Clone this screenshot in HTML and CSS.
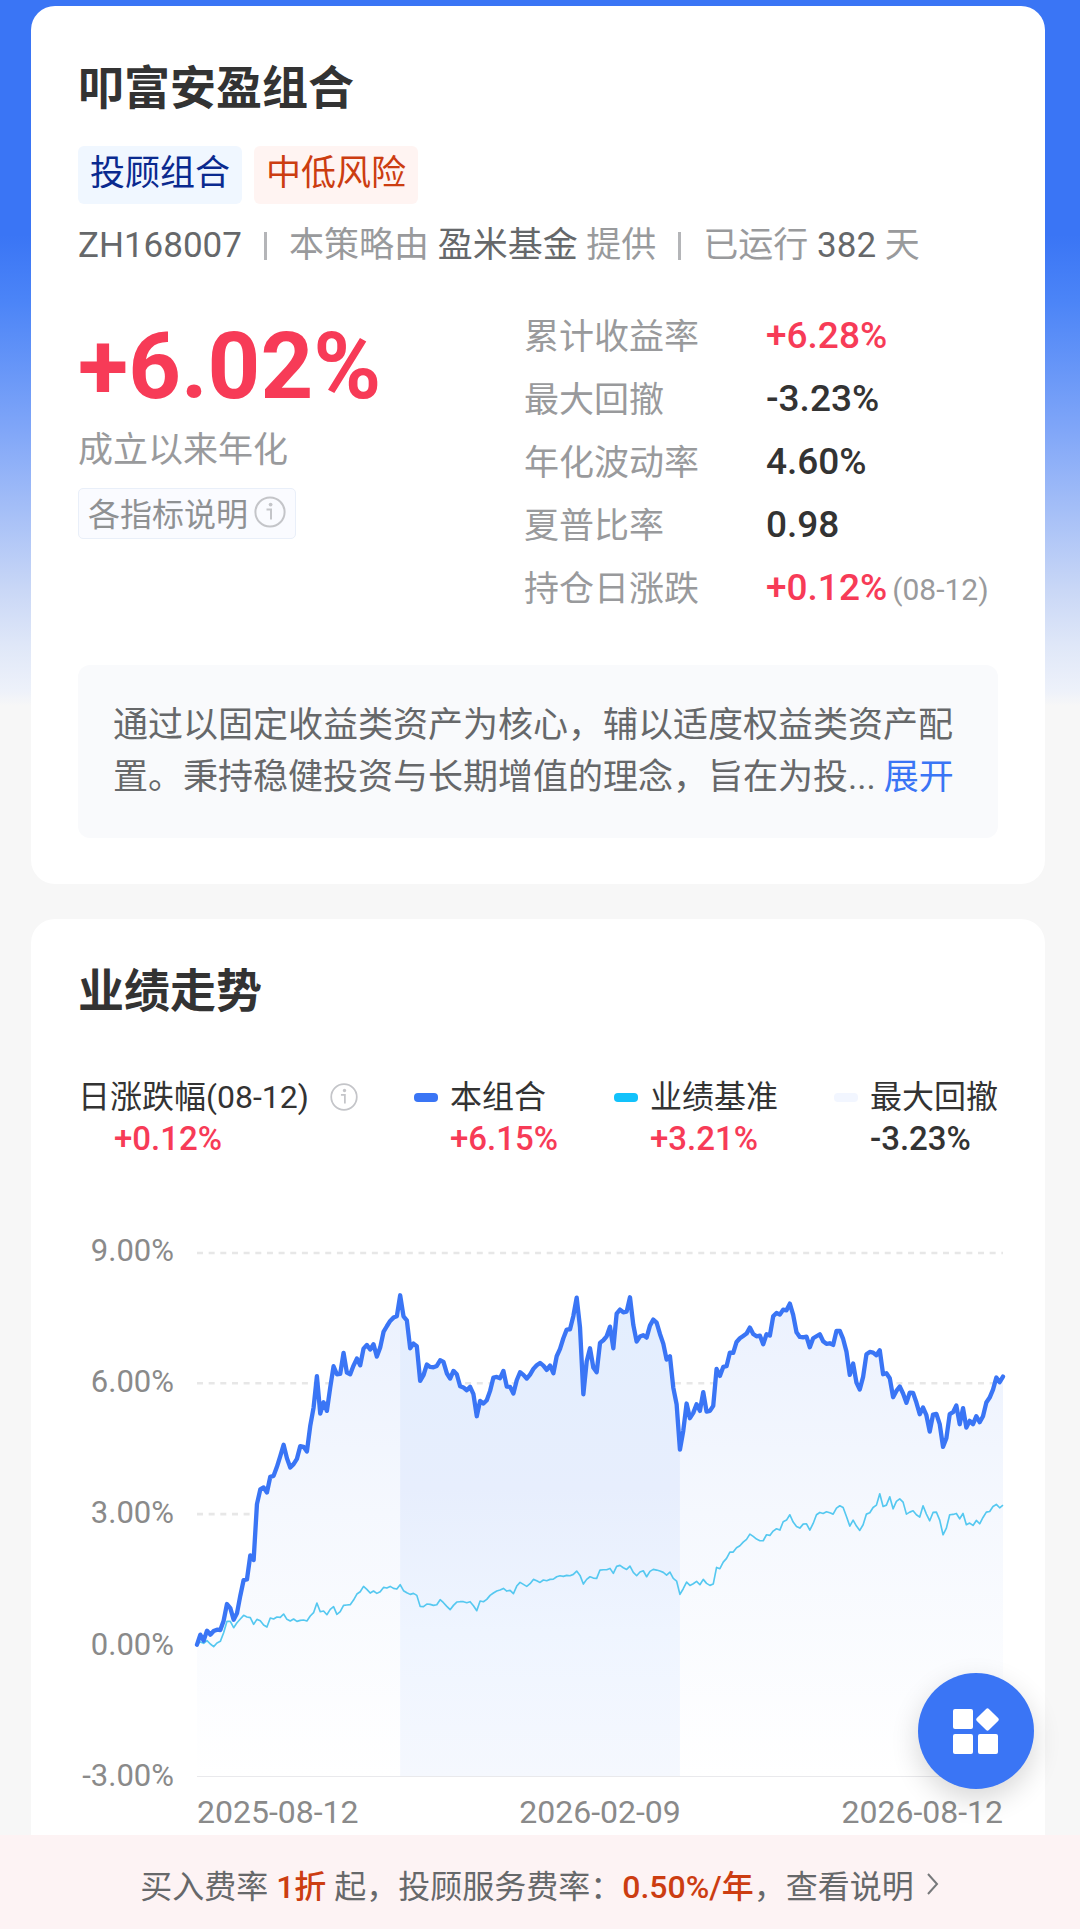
FILE: index.html
```html
<!DOCTYPE html>
<html lang="zh-CN">
<head>
  <meta charset="UTF-8">
  <meta name="viewport" content="width=device-width, initial-scale=1.0">
  <title>叩富安盈组合</title>
  <link rel="stylesheet" href="styles.css">
</head>
<body>

  <main class="page">
    <section class="card summary">
      <h1>叩富安盈组合</h1>
      <div class="tags">
        <span class="tag tag-type">投顾组合</span>
        <span class="tag tag-risk">中低风险</span>
      </div>
      <div class="meta">
        <span class="dark">ZH168007</span>
        <i class="divider"></i>
        <span>本策略由 <b>盈米基金</b> 提供</span>
        <i class="divider"></i>
        <span>已运行 <b>382</b> 天</span>
      </div>

      <div class="stats">
        <div class="main-stat">
          <div class="big up">+6.02%</div>
          <div class="caption">成立以来年化</div>
          <button type="button" class="explain">各指标说明
            <svg class="info" viewBox="0 0 32 32"><circle cx="16" cy="16" r="14.6"/><path d="M12.5 13.5h4.5v10"/><circle class="dot" cx="16.6" cy="8.6" r="1.9"/></svg>
          </button>
        </div>
        <dl class="metrics">
          <dt>累计收益率</dt><dd class="up">+6.28%</dd>
          <dt>最大回撤</dt><dd>-3.23%</dd>
          <dt>年化波动率</dt><dd>4.60%</dd>
          <dt>夏普比率</dt><dd>0.98</dd>
          <dt>持仓日涨跌</dt><dd class="up">+0.12%<small>(08-12)</small></dd>
        </dl>
      </div>

      <p class="intro">通过以固定收益类资产为核心，辅以适度权益类资产配置。秉持稳健投资与长期增值的理念，旨在为投...<a href="#more">展开</a></p>
    </section>

    <section class="card trend">
      <h2>业绩走势</h2>
      <div class="legend">
        <div class="legend-item day">
          <span class="name">日涨跌幅(08-12)
            <svg class="info" viewBox="0 0 32 32"><circle cx="16" cy="16" r="14.6"/><path d="M12.5 13.5h4.5v10"/><circle class="dot" cx="16.6" cy="8.6" r="1.9"/></svg>
          </span>
          <span class="value up">+0.12%</span>
        </div>
        <div class="legend-item">
          <span class="name"><i class="mark fund"></i>本组合</span>
          <span class="value up">+6.15%</span>
        </div>
        <div class="legend-item">
          <span class="name"><i class="mark bench"></i>业绩基准</span>
          <span class="value up">+3.21%</span>
        </div>
        <div class="legend-item">
          <span class="name"><i class="mark drawdown"></i>最大回撤</span>
          <span class="value">-3.23%</span>
        </div>
      </div>

      <div class="chart">
        <div class="y-axis">
          <span>9.00%</span>
          <span>6.00%</span>
          <span>3.00%</span>
          <span>0.00%</span>
          <span>-3.00%</span>
        </div>
        <svg class="plot" viewBox="0 0 2420 1570">
          <defs>
            <linearGradient id="areaFill" gradientUnits="userSpaceOnUse" x1="0" y1="130" x2="0" y2="1570">
              <stop offset="0" stop-color="#ebf1fe"/>
              <stop offset="0.45" stop-color="#f5f8fe"/>
              <stop offset="1" stop-color="#ffffff"/>
            </linearGradient>
            <linearGradient id="drawdownFill" gradientUnits="userSpaceOnUse" x1="0" y1="130" x2="0" y2="1570">
              <stop offset="0" stop-color="#e3eefe"/>
              <stop offset="0.4" stop-color="#e7eefd"/>
              <stop offset="0.7" stop-color="#eff5ff"/>
              <stop offset="1" stop-color="#f5f8fe"/>
            </linearGradient>
          </defs>
          <path class="grid" d="M0 0H2420M0 391H2420M0 784H2420M0 1177H2420"/>
          <path class="base" d="M0 1570H2420"/>
          <path id="area" fill="url(#areaFill)"/>
          <path id="drawdown" fill="url(#drawdownFill)"/>
          <path id="benchLine" class="bench-line"/>
          <path id="fundLine" class="fund-line"/>
        </svg>
        <div class="x-axis">
          <span>2025-08-12</span>
          <span>2026-02-09</span>
          <span>2026-08-12</span>
        </div>
      </div>
    </section>

    <footer class="fee-bar">
      <span>买入费率 <b>1折</b> 起，投顾服务费率：<b>0.50%/年</b>，</span>
      <a href="#fee">查看说明
        <svg viewBox="0 0 14 24"><path d="M2 2l9 10-9 10"/></svg>
      </a>
    </footer>
  </main>

  <button type="button" class="fab" aria-label="更多功能">
    <svg viewBox="0 0 46 46">
      <rect x="0" y="1" width="20" height="20" rx="2"/>
      <rect x="0" y="26" width="20" height="20" rx="2"/>
      <rect x="25" y="26" width="20" height="20" rx="2"/>
      <rect x="26" y="3" width="17" height="17" rx="2" transform="rotate(45 34.5 11.5)"/>
    </svg>
  </button>

  <script src="chart.js"></script>
</body>
</html>
```
FILE: styles.css
```css
* {
  box-sizing: border-box;
}
body {
  margin: 0;
  font-family: Roboto, "Noto Sans CJK SC", sans-serif;
  color: #333;
  background: #f7f7f7 linear-gradient(#3a75f5 0, #3a75f5 235px, #4b84f7 300px, #80a6f8 430px, #c9d7f6 590px, #dfe7f8 645px, #edf1fa 690px, #f7f7f7 706px) no-repeat;
}
h1, h2, p, dl, dd {
  margin: 0;
}
b {
  font-weight: 400;
}
.page {
  display: flex;
  flex-direction: column;
  min-height: 100vh;
  padding-top: 6px;
}
.card {
  margin: 0 35px 0 31px;
  padding: 0 47px;
  background: #fff;
  border-radius: 24px;
}
.card h1, .card h2 {
  font-size: 46px;
  line-height: 56px;
  font-weight: 700;
}
.up {
  color: #f73b57;
}

/* summary */
.summary {
  padding-top: 54px;
  padding-bottom: 46px;
}
.tags {
  display: flex;
  gap: 12px;
  margin-top: 30px;
}
.tag {
  padding: 0 12px;
  border-radius: 6px;
  font-size: 35px;
  line-height: 56px;
  height: 58px;
}
.tag-type {
  color: #0a2a8f;
  background: #f0f7ff;
}
.tag-risk {
  color: #cc3d11;
  background: #fff4f2;
}
.meta {
  display: flex;
  align-items: center;
  margin-top: 18px;
  font-size: 35px;
  line-height: 48px;
  color: #999a9c;
  white-space: nowrap;
}
.meta b, .meta .dark {
  color: #66686a;
}
.divider {
  width: 3px;
  height: 28px;
  margin: 0 22px;
  background: #b4b5b8;
}
.stats {
  display: flex;
  justify-content: space-between;
  margin-top: 32px;
}
.main-stat {
  padding-top: 19px;
}
.big {
  font-size: 92px;
  line-height: 92px;
  font-weight: 700;
}
.caption {
  margin-top: 14px;
  font-size: 35px;
  line-height: 48px;
  color: #999a9c;
}
.explain {
  display: flex;
  align-items: center;
  gap: 6px;
  margin-top: 13px;
  padding: 0 9px 4px;
  height: 51px;
  border: 1px solid #e9eff9;
  border-radius: 5px;
  background: #fafbff;
  color: #8f9193;
  font: inherit;
  font-size: 32px;
}
.info {
  width: 32px;
  height: 32px;
  fill: none;
  stroke: #c4c5c9;
  stroke-width: 2;
}
.info .dot {
  fill: #c4c5c9;
  stroke: none;
}
.metrics {
  display: grid;
  grid-template-columns: 242px 232px;
  grid-auto-rows: 63px;
  align-items: center;
  white-space: nowrap;
}
.metrics dt {
  font-size: 35px;
  color: #999a9c;
}
.metrics dd {
  padding-top: 3px;
  font-size: 37px;
  font-weight: 500;
}
.metrics small {
  margin-left: 5px;
  font-size: 30px;
  font-weight: 400;
  color: #999a9c;
}
.intro {
  margin-top: 48px;
  padding: 35px 35px 34px;
  border-radius: 12px;
  background: #f9fafc;
  font-size: 35px;
  line-height: 52px;
  color: #66686a;
}
.intro a {
  margin-left: 8px;
  color: #3a75f5;
  text-decoration: none;
}

/* trend */
.trend {
  flex: 1;
  margin-top: 35px;
  padding-top: 44px;
  border-radius: 24px 24px 0 0;
}
.legend {
  display: flex;
  justify-content: space-between;
  margin-top: 58px;
  font-size: 32px;
  line-height: 40px;
  white-space: nowrap;
}
.legend-item {
  display: flex;
  flex-direction: column;
  gap: 2px;
}
.name {
  display: flex;
  align-items: center;
}
.name .info {
  width: 28px;
  height: 28px;
  margin-left: 21px;
}
.value {
  padding-left: 36px;
  font-size: 33px;
  font-weight: 500;
}
.mark {
  width: 24px;
  height: 9px;
  margin-right: 12px;
  border-radius: 4px;
}
.mark.fund {
  background: #3a75f5;
}
.mark.bench {
  background: #12c2fb;
}
.mark.drawdown {
  background: #f2f6ff;
}
.chart {
  display: grid;
  grid-template-columns: 96px 1fr;
  column-gap: 23px;
  margin: 94px -5px 0 0;
  font-size: 31px;
  color: #8a8a8a;
}
.y-axis {
  display: flex;
  flex-direction: column;
  justify-content: space-between;
  align-items: flex-end;
  margin: -21px 0 -19px;
  line-height: 38px;
}
.plot {
  display: block;
  width: 100%;
  overflow: visible;
  fill: none;
}
.grid {
  stroke: #e7e7e7;
  stroke-width: 8;
  stroke-dasharray: 18 17;
}
.base {
  stroke: #e9e9ec;
  stroke-width: 6;
}
.fund-line {
  stroke: #3a75f5;
  stroke-width: 13;
  stroke-linejoin: round;
  stroke-linecap: round;
}
.bench-line {
  stroke: #55c8f0;
  stroke-width: 5;
  stroke-linejoin: round;
}
.x-axis {
  grid-column: 2;
  display: flex;
  justify-content: space-between;
  margin-top: 16px;
  font-size: 32px;
  line-height: 40px;
}

/* bottom bar */
.fee-bar {
  position: sticky;
  bottom: 0;
  display: flex;
  justify-content: center;
  align-items: center;
  height: 94px;
  padding-top: 4px;
  background: #fdf3f4;
  font-size: 32px;
  color: #66686a;
}
.fee-bar b {
  color: #cc3d11;
  font-weight: 500;
}
.fee-bar a {
  display: flex;
  align-items: center;
  gap: 12px;
  color: inherit;
  text-decoration: none;
}
.fee-bar svg {
  width: 14px;
  height: 24px;
  fill: none;
  stroke: #77797b;
  stroke-width: 2;
}
.fab {
  position: fixed;
  right: 46px;
  bottom: 140px;
  display: flex;
  justify-content: center;
  align-items: center;
  width: 116px;
  height: 116px;
  padding: 0;
  border: none;
  border-radius: 50%;
  background: #3a75f5;
  box-shadow: 0 10px 28px rgba(0, 0, 0, 0.16);
}
.fab svg {
  width: 46px;
  height: 46px;
  fill: #fff;
}
```
FILE: chart.js
```js
// one value per trading day, distance from the top of the scale
const fund = [
  1176, 1146, 1164, 1134, 1146, 1135, 1131, 1132, 1104, 1054, 1066, 1101, 1082, 1029, 982, 980, 908, 922, 754, 710,
  704, 719, 672, 669, 642, 610, 576, 616, 644, 634, 618, 580, 582, 596, 519, 464, 370, 482, 448, 474,
  404, 340, 364, 363, 300, 359, 364, 338, 317, 337, 287, 276, 290, 274, 311, 284, 237, 220, 204, 194,
  190, 127, 190, 202, 286, 272, 280, 384, 367, 335, 342, 343, 339, 322, 327, 361, 377, 354, 364, 400,
  404, 412, 402, 424, 490, 444, 452, 442, 414, 374, 372, 376, 354, 401, 402, 422, 382, 358, 366, 377,
  365, 348, 337, 330, 338, 351, 338, 361, 310, 288, 256, 230, 229, 189, 134, 224, 424, 326, 286, 344,
  358, 270, 262, 250, 221, 286, 182, 170, 178, 176, 133, 216, 266, 251, 247, 254, 218, 200, 209, 243,
  272, 320, 310, 404, 454, 590, 534, 452, 496, 480, 454, 474, 418, 476, 474, 459, 348, 369, 342, 340,
  299, 300, 267, 256, 249, 242, 224, 243, 250, 248, 274, 244, 248, 190, 180, 185, 170, 172, 152, 186,
  238, 252, 253, 251, 283, 256, 250, 244, 265, 273, 271, 276, 234, 234, 258, 296, 366, 332, 389, 410,
  372, 304, 297, 299, 307, 292, 364, 361, 376, 433, 414, 401, 422, 450, 419, 420, 449, 484, 464, 487,
  536, 485, 483, 514, 582, 556, 484, 478, 458, 514, 466, 524, 504, 514, 490, 508, 490, 449, 434, 410,
  374, 388, 371
];

const bench = [
  1174, 1168, 1172, 1164, 1174, 1182, 1171, 1166, 1140, 1106, 1106, 1125, 1110, 1099, 1088, 1093, 1095, 1115, 1100, 1104,
  1117, 1123, 1096, 1099, 1093, 1094, 1084, 1100, 1105, 1099, 1106, 1103, 1102, 1105, 1090, 1080, 1051, 1077, 1075, 1086,
  1070, 1062, 1085, 1077, 1058, 1057, 1056, 1042, 1024, 1017, 1001, 1010, 1021, 1015, 1022, 1017, 1004, 1006, 1001, 1007,
  1009, 996, 1014, 1020, 1025, 1022, 1028, 1061, 1062, 1054, 1055, 1058, 1056, 1041, 1050, 1061, 1071, 1058, 1048, 1047,
  1047, 1050, 1047, 1059, 1074, 1045, 1047, 1040, 1028, 1021, 1015, 1012, 1007, 1015, 1013, 1023, 1000, 989, 995, 1001,
  993, 980, 984, 989, 982, 984, 980, 979, 972, 969, 971, 968, 969, 965, 955, 968, 994, 980, 972, 976,
  977, 952, 951, 951, 947, 962, 941, 938, 945, 950, 940, 959, 969, 958, 954, 972, 956, 950, 952, 955,
  959, 967, 958, 977, 985, 1025, 1008, 988, 998, 993, 986, 996, 980, 992, 998, 994, 944, 948, 928, 917,
  898, 898, 885, 879, 868, 860, 844, 851, 859, 864, 864, 846, 848, 835, 828, 832, 807, 802, 786, 808,
  821, 826, 814, 813, 832, 812, 786, 779, 782, 777, 780, 784, 766, 759, 764, 791, 820, 802, 820, 833,
  816, 784, 780, 764, 757, 723, 761, 757, 732, 768, 746, 738, 748, 784, 778, 774, 786, 793, 759, 784,
  804, 779, 778, 802, 846, 826, 786, 785, 782, 798, 782, 816, 811, 818, 803, 813, 794, 778, 776, 761,
  755, 765, 757
];

const step = 10;
const bottom = 1570;

function line(data, from = 0) {
  return "M" + data.map((y, i) => (from + i) * step + " " + y).join("L");
}

function area(data, from = 0) {
  const end = (from + data.length - 1) * step;
  return line(data, from) + "V" + bottom + "H" + from * step + "Z";
}

// maximum drawdown runs from day 61 to day 145
document.getElementById("area").setAttribute("d", area(fund));
document.getElementById("drawdown").setAttribute("d", area(fund.slice(61, 146), 61));
document.getElementById("benchLine").setAttribute("d", line(bench));
document.getElementById("fundLine").setAttribute("d", line(fund));
```
